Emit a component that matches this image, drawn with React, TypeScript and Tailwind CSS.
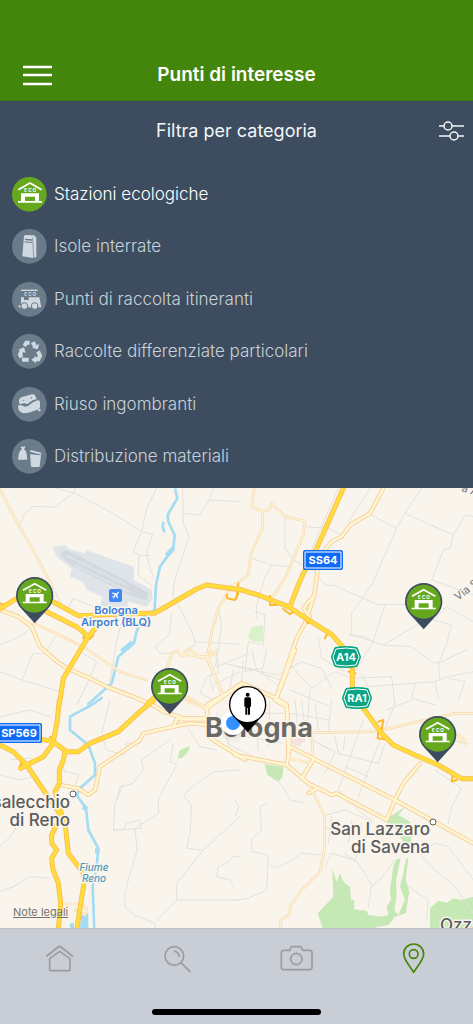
import { useState } from "react";
import type { ReactNode } from "react";

function EcoLetters({ y }: { y: number }) {
  return (
    <g fill="currentColor" fontSize="14" fontWeight="700" textAnchor="middle">
      {["E", "C", "O"].map((c, i) => (
        <text key={c} x={41 + i * 13} y={y}>
          {c}
        </text>
      ))}
    </g>
  );
}

function EcoHouse() {
  return (
    <g>
      <path d="M19 38L54 18L89 38" fill="none" stroke="currentColor" strokeWidth="5" />
      <EcoLetters y={45} />
      <path d="M27 49H81V72H90V77H18V72H27ZM39 59V72H69V59Z" fill="currentColor" fillRule="evenodd" />
    </g>
  );
}

function IsolaIcon() {
  return (
    <g fill="currentColor">
      <path d="M36 21L40 18L66 19L73 26V84L63 87L31 82Z" />
      <path d="M39 29L60 31V35L39 33ZM38 37L60 39V42L38 40Z" fill="#6a7b89" />
      <path d="M62 26L65 87" stroke="#6a7b89" strokeWidth="2" />
    </g>
  );
}

function VanIcon() {
  return (
    <g fill="currentColor">
      <rect x="27" y="23" width="50" height="4" />
      <EcoLetters y={41} />
      <path d="M27 46H36V54H50V46H82L88 76H19V71L27 70Z" />
      <circle cx="37" cy="72" r="10" stroke="#6a7b89" strokeWidth="3" />
      <circle cx="68" cy="72" r="10" stroke="#6a7b89" strokeWidth="3" />
    </g>
  );
}

function RecycleIcon() {
  return (
    <g>
      <path
        d="M37 36L43 26H53M62 25L69 37M29 50L24 62L29 70M30 77H50M78 52L84 65L79 76H70"
        fill="none"
        stroke="currentColor"
        strokeWidth="12"
      />
      <path d="M60 41L77 46L82 29ZM18 47L36 40L41 57ZM72 66V88L58 77Z" fill="currentColor" />
    </g>
  );
}

function SofaIcon() {
  return (
    <g fill="currentColor">
      <path d="M21 44Q20 33 30 30L60 22Q69 20 71 29L74 37L62 40L46 51L36 49L23 52Z" />
      <path d="M18 57Q20 53 26 54L39 59L48 57L64 45L77 40Q84 39 84 47V61L80 67L50 77L32 79L20 70Z" />
      <circle cx="82" cy="69" r="4" />
      <circle cx="35" cy="40" r="2" fill="#6a7b89" />
      <circle cx="58" cy="33" r="2" fill="#6a7b89" />
    </g>
  );
}

function MaterialiIcon() {
  return (
    <g fill="currentColor">
      <path d="M18 62L21 42Q24 34 30 31L26 24L31 22L33 25L36 21L40 24L36 31Q43 35 44 44L46 62Z" />
      <path d="M54 38L56 33L88 41L87 47Z" />
      <path d="M54 46L87 49L83 82Q83 84 80 84H61Q57 84 57 81Z" />
    </g>
  );
}

const categories: { id: string; label: string; icon: ReactNode }[] = [
  { id: "stazioni", label: "Stazioni ecologiche", icon: <EcoHouse /> },
  { id: "isole", label: "Isole interrate", icon: <IsolaIcon /> },
  { id: "itineranti", label: "Punti di raccolta itineranti", icon: <VanIcon /> },
  { id: "raccolte", label: "Raccolte differenziate particolari", icon: <RecycleIcon /> },
  { id: "riuso", label: "Riuso ingombranti", icon: <SofaIcon /> },
  { id: "materiali", label: "Distribuzione materiali", icon: <MaterialiIcon /> },
];

// The map is drawn in tiles, three units to a pixel
const tiles = {
  nw: "translate(0 -3) scale(.3333)",
  ne: "translate(235 -3) scale(.3333)",
  sw: "translate(0 212) scale(.3333)",
  se: "translate(235 212) scale(.3333)",
  center: "translate(180 162) scale(.3333)",
};
type Tile = keyof typeof tiles;

const lanes: [Tile, string][] = [
  ["nw", "M225 10L220 25L165 66L98 64L75 85L62 115M170 10L225 25L330 80L425 140L458 148L440 205L450 250L462 280M470 10L440 70L425 140L400 200L418 210L448 212M418 210L414 270L455 300"],
  ["nw", "M548 10L550 115L568 155L525 280L518 330L545 380L580 450L585 480L550 500M550 85L600 90L628 45L720 50M628 45L640 10M515 385L508 450L465 485L480 505L520 505"],
  ["nw", "M585 470L720 478M655 370L665 420L650 530L630 580L640 620M150 290L185 360L205 370L220 340L290 370M165 455L135 505L98 505L66 585L0 560M66 585L180 620M365 410L350 470L330 590"],
  ["nw", "M0 480L60 455L100 425M240 500L290 530L260 600L230 660M720 560L640 600"],
  ["ne", "M560 10L510 85L485 130L410 300L350 385L350 450M410 90L485 130M510 85L655 150L690 90L715 95M655 150L645 190L625 195L590 285L715 330M250 275L270 300L300 302L425 358L510 358"],
  ["ne", "M450 358L415 470L390 455L345 450M345 450L370 455L445 480L530 485L590 530L610 535L700 492M580 400L650 420L635 475L610 540L615 580M445 480L580 400M635 365L715 410M635 365L600 400"],
  ["ne", "M210 125L280 130L320 150M310 10L235 180L215 250M405 10L340 110M150 90L150 190L175 225L240 260M50 220L110 240L90 275L65 360L65 400M110 240L170 245"],
  ["ne", "M60 380L90 390L85 480L40 470L30 560L80 550M0 545L130 570L200 530L260 550L290 610M165 540L230 610L300 560L350 580L470 575L480 660M380 570L400 605L600 590L640 575L715 560"],
  ["ne", "M540 595L530 640L600 660M600 590L610 640M640 580L690 590L670 645M415 470L360 560M250 460L260 520L330 560"],
  ["sw", "M0 50L90 30L150 50M30 180L90 175L120 185M0 225L60 240L100 230M180 210L235 225L225 265M185 190L195 215M0 440L40 400L60 350"],
  ["sw", "M0 575L40 560L90 530L150 535L165 520M330 0L305 100L320 150L370 165L380 130L420 130M510 120L425 180L430 210L400 250L360 260L350 300M520 130L510 185L530 195L495 260L475 300L475 340L405 385L412 450L390 520L375 580L375 620L400 645L465 670V690"],
  ["sw", "M720 210L640 215L570 265L550 290L575 315L570 400L560 445L610 450L530 550L530 600L470 660M530 600L720 600M340 390L370 390L380 370L420 360L425 385L340 390L345 310L370 255M610 450L720 350M650 530L655 500L680 490L700 470L720 470M650 530L690 540L700 560"],
  ["se", "M0 300L12 320L0 350M95 310L75 320L80 390L50 420L50 455L100 465L95 570L40 595L0 600M100 490L120 505L165 485L200 460L262 465M120 230L150 270L165 300L210 310"],
  ["se", "M275 345L330 330L410 365L360 480L290 460L270 500M330 460L370 490L410 555L400 620M480 480L435 540L410 560M350 360L340 430M380 370L370 450M270 380L320 400M290 350L280 430"],
  ["se", "M385 60L310 270L380 340L415 365M480 10L400 210L370 290M300 110L310 160L430 190L450 130M250 130L300 155L270 220M330 200L400 230M455 30L530 0M640 120L700 130M600 210L680 265L650 320L640 370"],
  ["se", "M530 430L590 500L660 560L715 640M545 460L600 430L640 440L715 540M520 560L580 600L575 660M200 0L210 90M240 10L250 90M290 0L280 90M330 110L325 150"],
  ["center", "M110 0L115 70L80 80L60 130M110 50L210 10M130 40L230 60L300 110M60 130L100 150M230 60L215 0M160 60L150 115M190 30L185 100M260 0L245 70L300 90"],
  ["center", "M95 210L200 260L310 280M110 250L300 240M200 190L320 190M225 160L235 300M270 150L265 290M110 190L150 290M140 280L220 320M330 190L450 210M345 150L360 290M390 120L380 260L450 300M330 120L450 170M20 230L60 290L110 300"],
];

const minorRoads: [Tile, string][] = [
  ["nw", "M0 15L70 145L110 215L155 300M100 415L180 450L260 492L360 560L440 585"],
  ["nw", "M500 555L515 505L530 498L545 515L568 492L600 515L622 515L635 440L655 370L680 330L690 305L720 290M622 515L668 632"],
  ["ne", "M0 300L40 270L48 205L82 130V80L50 65L58 10M82 80L105 72L110 55L150 95L210 108L205 150L150 280L110 340"],
  ["se", "M220 250L268 345V450L255 515L200 570L165 620V640L138 660L135 690M235 98L420 95L660 40H720M230 95L235 180M160 175L185 180L225 190"],
  ["sw", "M180 612L245 612L260 625L255 645L225 630M550 -15L625 25"],
  ["center", "M0 15L30 15L80 25L100 10M80 25L130 135M-30 130L80 178"],
];

const mainRoads: [Tile, string][] = [
  ["nw", "M0 375L55 395L95 425L120 485L165 525L200 550L260 575L320 605L400 635L460 662"],
  ["nw", "M720 600L668 632L620 660"],
  ["ne", "M445 10L405 85L345 120L320 155L290 170L270 195L250 240L238 330L210 415L185 460L125 635"],
  ["ne", "M238 330L205 370L225 395"],
  ["sw", "M410 -5L460 15L490 35L550 55H625M180 255L235 265L265 285L285 270L300 200L330 180L420 120L430 100L520 80L570 70L635 76M520 80L535 50"],
  ["se", "M0 165L155 195L165 140L155 20L120 0M155 195L220 250L290 285L305 280L455 360L480 300M165 140L480 300L715 430M480 300L505 250L555 190M200 235L235 180M220 280L245 265"],
  ["center", "M185 100L80 175L85 212L92 265L195 330M0 208H82M185 100L290 145L320 163L325 310M345 0L290 145"],
];

const highways: [Tile, string][] = [
  ["nw", "M140 380L235 428L265 455M290 425L262 460L190 580L178 660"],
  ["nw", "M-10 378L48 342L155 348L235 392L465 384L590 312L620 300L720 314"],
  ["ne", "M10 312L70 330L160 365L210 398L290 448L328 492L352 550V610L367 640"],
  ["ne", "M325 10L245 190L205 265L190 300L165 365"],
  ["nw", "M440 660L465 635"],
  ["sw", "M178 0L172 60L160 125M462 0L420 35L355 95L270 130L235 155H200L160 125L125 118"],
  ["sw", "M0 135L40 155L80 195L120 255L165 320L195 365L205 460L250 520L252 550L230 690"],
  ["sw", "M160 130L130 170L80 195L62 205M195 155L190 180L178 210V250L165 275L180 320L185 350L170 375L155 405V430L170 450L155 475L158 505L175 550L182 610L175 690"],
  ["se", "M367 -5L385 25L440 100L475 135L540 165L610 195L680 236H720"],
];

const ramps: [Tile, string][] = [
  ["nw", "M255 440L250 460L270 462L280 450M0 355L20 362M680 330L682 340L705 345L715 325"],
  ["ne", "M10 295L5 340M105 332V360H125M145 372L165 388L180 375M195 285L190 310M205 395L220 415M280 440L270 460M340 560L362 565"],
  ["se", "M430 65L445 60L440 90M430 95L428 115L450 118M655 215L650 245L665 240"],
  ["sw", "M80 195L65 185L58 205L75 200M150 110L180 140M125 118L150 125L165 110"],
];

function Roads({ roads, color, width }: { roads: [Tile, string][]; color: string; width: number }) {
  return (
    <g fill="none" stroke={color} strokeWidth={width} strokeLinejoin="round" strokeLinecap="round">
      {roads.map(([tile, d]) => (
        <path key={tile + d} transform={tiles[tile]} d={d} />
      ))}
    </g>
  );
}

function Terrain() {
  return (
    <g>
      <g transform={tiles.nw}>
        <path d="M158 185L195 180L207 192L252 205L260 196L402 245V285L455 315L458 340L440 365L385 350V385L290 390L308 335L262 315L250 292L210 275L215 250L170 215Z" fill="#dfe4e9" />
        <path d="M180 205L200 195L240 215L395 295L445 325L440 345L400 335L250 260L225 245L195 225Z" fill="#d3d9df" />
        <path d="M200 212L380 300M225 240L390 322" stroke="#dfe4e9" strokeWidth="5" />
        <path d="M625 495L650 490V515L628 515Z" fill="#faeecb" />
      </g>
      <g fill="#c5e8b4">
        <path transform={tiles.ne} d="M50 425L85 420L83 470L58 470L38 460Z" fill="#d9f2cc" />
        <path transform={tiles.sw} d="M540 150L570 138L565 155L545 175L533 175Z" />
        <path transform={tiles.se} d="M88 192L145 200L143 230L130 246L98 225Z" />
        <path transform={tiles.se} d="M510 320L490 345L525 365L530 430L505 425L480 385L455 375L465 350Z" />
        <path
          transform={tiles.se}
          fillRule="evenodd"
          d="M292 508L305 545L315 518L325 545L345 560L348 598L358 602V628L395 632L400 645L440 650L460 645L455 620L468 600L465 570L475 500L485 478L497 475L483 540L485 590L478 630L490 645L510 600L495 560L505 520L513 475L520 475L512 540L523 575L512 640L480 650L460 675L385 690H265L248 640L295 590Z"
        />
        <path transform={tiles.se} d="M585 690V625L610 602L635 608L655 595L680 600L715 590V690Z" />
      </g>
      <path transform={tiles.se} d="M665 95L695 115V140L670 130Z" fill="#faeecb" />
      <path transform={tiles.center} d="M330 240H375V275L345 290L330 270Z" fill="#f8e2e0" />
      <path transform={tiles.sw} d="M210 670H222V690H210ZM243 640H265V690H240Z" fill="#a3dcf3" />
      <g fill="none" stroke="#a3dcf3" strokeWidth="8" strokeLinejoin="round">
        <path transform={tiles.nw} d="M525 10L532 40L503 90L505 110L524 150L520 190L480 245L468 300L464 375L425 400L410 440L402 475L355 515L335 595L262 660" />
        <path transform={tiles.nw} d="M490 110L488 125L493 142" />
        <path transform={tiles.nw} d="M520 190L500 212M398 472L365 500" strokeWidth="15" />
        <path transform={tiles.sw} d="M308 -8L275 15L210 50V90L265 135L285 190V225L240 265L230 285L258 325L265 390L295 445L290 500L278 560L283 690" />
        <path transform={tiles.sw} d="M250 320L260 328M292 445V460" strokeWidth="14" />
      </g>
    </g>
  );
}

const shields = [
  { name: "SS64", x: 323, y: 72, width: 36, fill: "#0f6bf5" },
  { name: "SP569", x: 19, y: 245, width: 42, fill: "#0f6bf5" },
  { name: "A14", x: 346, y: 169, width: 26, fill: "#08a483" },
  { name: "RA1", x: 357, y: 210, width: 26, fill: "#08a483" },
];

function Shield({ name, x, y, width, fill }: (typeof shields)[number]) {
  const w = width / 2;
  const motorway = fill === "#08a483";
  const outline = motorway
    ? `M${-w + 3} -8Q0 -10 ${w - 3} -8L${w} 0L${w - 3} 8Q0 10 ${-w + 3} 8L${-w} 0Z`
    : `M${-w} -8H${w}V8H${-w}Z`;
  return (
    <g transform={`translate(${x} ${y})`}>
      <path d={outline} fill={fill} stroke={fill} strokeWidth="4" strokeLinejoin="round" />
      <path d={outline} fill={fill} stroke="#fff" strokeWidth="1" strokeLinejoin="round" />
      <text y="4" textAnchor="middle" fontSize="11" fontWeight="700" fill="#fff">
        {name}
      </text>
    </g>
  );
}

const stations = [
  { x: 16, y: 89 },
  { x: 151, y: 180 },
  { x: 405, y: 95 },
  { x: 419, y: 228 },
];

function CityMap({ showStations }: { showStations: boolean }) {
  return (
    <svg
      viewBox="0 0 473 440"
      preserveAspectRatio="xMidYMid slice"
      className="absolute inset-0 h-full w-full"
      role="img"
      aria-label="Mappa di Bologna"
    >
      <rect width="473" height="440" fill="#f9f5ed" />
      <Terrain />
      <Roads roads={lanes} color="#e3e1dc" width={3} />
      <Roads roads={minorRoads} color="#f7d9b0" width={8} />
      <Roads roads={mainRoads} color="#f6cb98" width={13} />
      <Roads roads={minorRoads} color="#fdf3d3" width={4} />
      <Roads roads={mainRoads} color="#fff6cf" width={8} />
      <Roads roads={ramps} color="#fcb928" width={6} />
      <Roads roads={highways} color="#f9b552" width={15} />
      <Roads roads={highways} color="#ffdc3b" width={11} />

      <g fill="#5c5c5c" stroke="#f9f5ed" strokeWidth="3" strokeLinejoin="round" paintOrder="stroke">
        <g fill="#3f80dc" fontSize="11" fontWeight="600" textAnchor="middle">
          <text x="116" y="126">Bologna</text>
          <text x="116" y="138">Airport (BLQ)</text>
        </g>
        <g fill="#4f9abb" fontSize="10" fontWeight="500" fontStyle="italic" textAnchor="middle">
          <text x="94" y="383">Fiume</text>
          <text x="94" y="394">Reno</text>
        </g>
        <g fontSize="17" fontWeight="500" textAnchor="end">
          <text x="70" y="320">Casalecchio</text>
          <text x="70" y="338">di Reno</text>
          <text x="430" y="347">San Lazzaro</text>
          <text x="430" y="365">di Savena</text>
        </g>
        <text x="440" y="443" fontSize="17" fontWeight="500">Ozzano</text>
        <text transform="translate(458 113) rotate(-38)" fontSize="11" fill="#77777a">Via San Vitale</text>
        <text transform="translate(461 3) rotate(18)" fontSize="11" fill="#77777a">a A</text>
        <text x="259" y="249" fontSize="27" fontWeight="700" textAnchor="middle" fill="#6b6965">Bologna</text>
      </g>
      <g fill="#fff" stroke="#5c5c5c" strokeWidth="1">
        <circle cx="73" cy="306" r="3" />
        <circle cx="433" cy="334" r="3" />
      </g>

      <rect x="109" y="101" width="13" height="13" rx="2" fill="#3f87f5" />
      <path
        transform="translate(116 107) rotate(45) scale(.42) translate(-12 -12)"
        d="M21 16v-2l-8-5V3.5c0-.8-.7-1.5-1.5-1.5S10 2.700 10 3.500V9l-8 5v2l8-2.500V19l-2 1.500V22l3.500-1 3.500 1v-1.500L13 19v-5.500l8 2.500z"
        fill="#fff"
      />
      {shields.map((s) => (
        <Shield key={s.name} {...s} />
      ))}

      {/* User position */}
      <circle cx="233" cy="235" r="12" fill="#fff" className="drop-shadow-md" />
      <circle cx="233" cy="235" r="7" fill="#3390ff" />

      {showStations &&
        stations.map((s) => (
          <g key={s.x} transform={`translate(${s.x} ${s.y}) scale(.3333)`} color="#fff">
            <path d="M17 96L56 139L95 96Z" fill="#3d4d5f" />
            <circle cx="56" cy="56" r="56" fill="#3d4d5f" />
            <circle cx="56" cy="56" r="51" fill="#65a81e" />
            <g transform="translate(2 2)">
              <EcoHouse />
            </g>
          </g>
        ))}

      <g transform="translate(229 198) scale(.3333)">
        <path d="M20 98L56 139L92 98Z" />
        <circle cx="56" cy="56" r="54" fill="#fff" stroke="#000" strokeWidth="4" />
        <circle cx="56" cy="26" r="6" />
        <path d="M50 34H62Q66 34 66 39V62H63V86H57V66H55V86H49V62H46V39Q46 34 50 34Z" />
      </g>
    </svg>
  );
}

const tabs: { id: string; label: string; icon: ReactNode }[] = [
  {
    id: "home",
    label: "Home",
    icon: <path d="M14 42L53 12L91 42M23 50L53 28L84 50V80Q84 86 78 86H29Q23 86 23 80Z" />,
  },
  {
    id: "cerca",
    label: "Cerca",
    icon: <path d="M15 42A28 28 0 1 0 71 42A28 28 0 1 0 15 42ZM43 28A14 14 0 0 1 57 43M63 62L90 89" />,
  },
  {
    id: "foto",
    label: "Foto",
    icon: (
      <path d="M14 25H32L37 14H66L71 25H92Q99 25 99 32V76Q99 83 92 83H14Q7 83 7 76V32Q7 25 14 25ZM35 51A17 17 0 1 0 69 51A17 17 0 1 0 35 51Z" />
    ),
  },
  {
    id: "mappa",
    label: "Mappa",
    icon: (
      <path d="M50 91C42 76 20 54 20 36A30 30 0 0 1 80 36C80 54 58 76 50 91ZM37 36A13 13 0 1 0 63 36A13 13 0 1 0 37 36Z" />
    ),
  },
];

export default function App() {
  const [category, setCategory] = useState("stazioni");
  const [tab, setTab] = useState("mappa");

  return (
    <div className="flex min-h-screen flex-col font-['Inter',sans-serif]">
      <header className="border-b border-[#3f7412] bg-[#44860b] pt-[50px] text-white">
        <div className="grid h-[50px] grid-cols-[1fr_auto_1fr] items-center px-[23px]">
          <button aria-label="Menu" className="justify-self-start">
            <svg viewBox="0 0 29 21" className="h-[21px] w-[29px]" fill="none" stroke="currentColor" strokeWidth="2.7" strokeLinecap="round">
              <path d="M1 2H28M1 10H28M1 19H28" />
            </svg>
          </button>
          <h1 className="text-[19px] font-semibold">Punti di interesse</h1>
        </div>
      </header>

      <section className="bg-[#3d4d5f] pb-[5px]">
        <div className="grid h-[67px] grid-cols-[1fr_auto_1fr] items-center px-[9px] pb-2 text-[#f3f5f7]">
          <h2 className="col-start-2 text-[18px]">Filtra per categoria</h2>
          <button aria-label="Filtri" className="justify-self-end">
            <svg viewBox="0 0 25 20" className="h-[20px] w-[25px]" fill="none" stroke="currentColor" strokeWidth="1.5">
              <path d="M0 5H5M13 5H25M0 15H11M19 15H25" />
              <circle cx="9" cy="5" r="4" />
              <circle cx="15" cy="15" r="4" />
            </svg>
          </button>
        </div>
        <ul className="grid h-[315px] grid-rows-6">
          {categories.map((c) => {
            const active = c.id === category;
            return (
              <li key={c.id} className="grid">
                <button
                  aria-pressed={active}
                  onClick={() => setCategory(c.id)}
                  className={`flex items-center gap-[7px] px-3 text-left text-[17px] font-light ${active ? "text-white" : "text-[#c9d1d8]"}`}
                >
                  <svg viewBox="0 0 105 105" className={`h-[35px] w-[35px] ${active ? "text-white" : "text-[#d0d8e1]"}`}>
                    <circle cx="52" cy="52" r="52" fill={active ? "#65a81e" : "#6a7b89"} />
                    {c.icon}
                  </svg>
                  {c.label}
                </button>
              </li>
            );
          })}
        </ul>
      </section>

      <main className="relative min-h-[300px] flex-1 overflow-hidden">
        <CityMap showStations={category === "stazioni"} />
        <a href="#note-legali" className="absolute bottom-2 left-[13px] text-[11px] text-[#77746f] underline">
          Note legali
        </a>
      </main>

      <footer className="border-t border-[#bfc1c6] bg-[#c9ced6]">
        <nav className="grid h-[60px] grid-cols-4">
          {tabs.map((t) => (
            <button
              key={t.id}
              aria-label={t.label}
              aria-current={t.id === tab ? "page" : undefined}
              onClick={() => setTab(t.id)}
              className={`grid place-items-center ${t.id === tab ? "text-[#44860b]" : "text-[#9a9c9f]"}`}
            >
              <svg viewBox="0 0 102 102" className="h-[34px] w-[34px]" fill="none" stroke="currentColor" strokeWidth="5" strokeLinejoin="round" strokeLinecap="round">
                {t.icon}
              </svg>
            </button>
          ))}
        </nav>
        <div className="flex h-[35px] items-end justify-center pb-[9px]">
          <span className="h-[6px] w-[169px] rounded-full bg-black" />
        </div>
      </footer>
    </div>
  );
}
